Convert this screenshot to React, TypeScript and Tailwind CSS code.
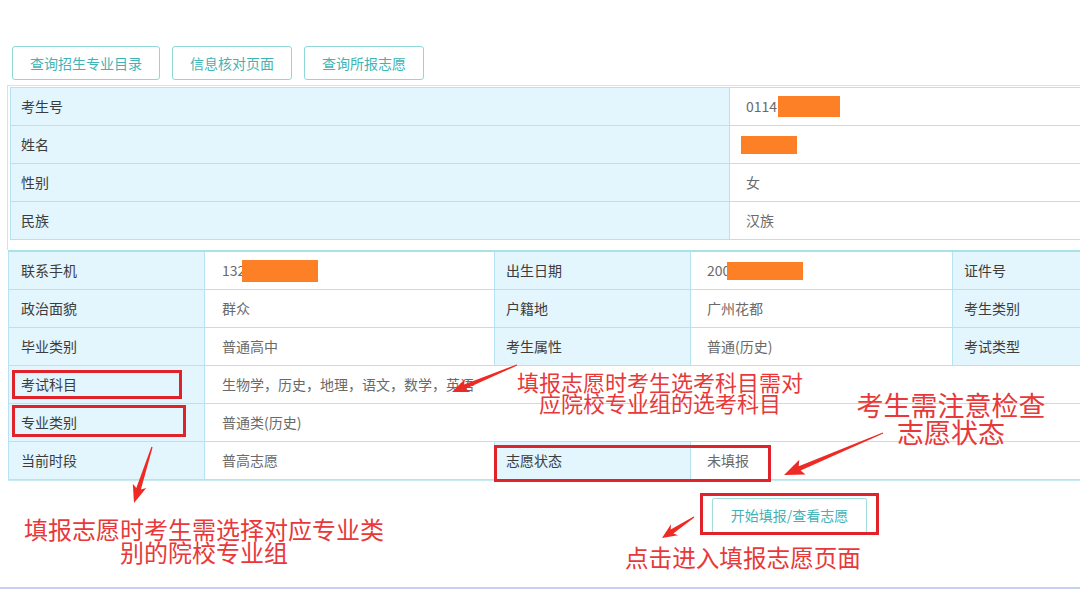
import React from "react";

type P = [number, number];

function arrowPoints(t: P, h: P, headLen = 17, headHalf = 7, tailHalf = 0.6, shaftHalf = 2.4): string {
  const dx = h[0] - t[0];
  const dy = h[1] - t[1];
  const len = Math.hypot(dx, dy);
  const ux = dx / len;
  const uy = dy / len;
  const nx = -uy;
  const ny = ux;
  const bx = h[0] - ux * headLen;
  const by = h[1] - uy * headLen;
  const jx = bx + ux * 3;
  const jy = by + uy * 3;
  const pts: P[] = [
    [t[0] + nx * tailHalf, t[1] + ny * tailHalf],
    [jx + nx * shaftHalf, jy + ny * shaftHalf],
    [bx + nx * headHalf, by + ny * headHalf],
    [h[0], h[1]],
    [bx - nx * headHalf, by - ny * headHalf],
    [jx - nx * shaftHalf, jy - ny * shaftHalf],
    [t[0] - nx * tailHalf, t[1] - ny * tailHalf],
  ];
  return pts.map((p) => `${p[0].toFixed(1)},${p[1].toFixed(1)}`).join(" ");
}

const Orange = ({ w, h, ml = 0 }: { w: number; h: number; ml?: number }) => (
  <span
    className="inline-block bg-[#fd7f26] align-middle"
    style={{ width: w, height: h, marginLeft: ml }}
  />
);

function TopButton({ children }: { children: React.ReactNode }) {
  return (
    <div className="h-[34px] px-[17px] flex items-center border border-[#8fd7d7] rounded-[3px] text-[14px] text-[#3fb4b5] bg-white">
      {children}
    </div>
  );
}

const lab = "bg-[#e3f5fd] border-r border-b border-[#b9e1f4] flex items-center text-[14px] text-[#3c3c3c] h-[38px]";
const val = "bg-white border-r border-b border-[#b9e1f4] flex items-center text-[14px] text-[#6a6a6a] h-[38px]";

export default function App() {
  return (
    <div className="relative w-[1080px] h-[589px] overflow-hidden bg-white flex flex-col font-['Noto_Sans_CJK_SC','Microsoft_YaHei',sans-serif]">
      {/* top buttons */}
      <div className="pt-[46px] pl-[12px] flex gap-[12px]">
        <TopButton>查询招生专业目录</TopButton>
        <TopButton>信息核对页面</TopButton>
        <TopButton>查询所报志愿</TopButton>
      </div>

      {/* panel 1 */}
      <div className="mt-[5px] ml-[7px] w-[1200px] border-l border-t border-[#c3eaee] pl-[2px] pt-[1px] pb-[10px]">
        <div className="border-l border-t border-[#b9e1f4] grid grid-cols-[719px_1fr]">
          <div className={`${lab} pl-[10px]`}>考生号</div>
          <div className={`${val} pl-[16px]`}>
            <span>0114</span>
            <Orange w={62} h={21} ml={1} />
          </div>
          <div className={`${lab} pl-[10px]`}>姓名</div>
          <div className={`${val} pl-[11px]`}>
            <Orange w={56} h={18} />
          </div>
          <div className={`${lab} pl-[10px]`}>性别</div>
          <div className={`${val} pl-[16px]`}>女</div>
          <div className={`${lab} pl-[10px]`}>民族</div>
          <div className={`${val} pl-[16px]`}>汉族</div>
        </div>
      </div>

      {/* table 2 */}
      <div className="ml-[8px] w-[1220px] border-t-2 border-t-[#a7e2e6] border-l border-l-[#b9e1f4] border-b border-b-[#c6ecf0]">
        <div className="grid grid-cols-[196px_290px_196px_262px_276px]">
          <div className={`${lab} pl-[12px]`}>联系手机</div>
          <div className={`${val} pl-[17px]`}>
            <span>132</span>
            <Orange w={76} h={22} ml={-3} />
          </div>
          <div className={`${lab} pl-[11px]`}>出生日期</div>
          <div className={`${val} pl-[16px]`}>
            <span>200</span>
            <Orange w={76} h={18} ml={-3} />
          </div>
          <div className={`${lab} pl-[11px]`}>证件号</div>

          <div className={`${lab} pl-[12px]`}>政治面貌</div>
          <div className={`${val} pl-[17px]`}>群众</div>
          <div className={`${lab} pl-[11px]`}>户籍地</div>
          <div className={`${val} pl-[16px]`}>广州花都</div>
          <div className={`${lab} pl-[11px]`}>考生类别</div>

          <div className={`${lab} pl-[12px]`}>毕业类别</div>
          <div className={`${val} pl-[17px]`}>普通高中</div>
          <div className={`${lab} pl-[11px]`}>考生属性</div>
          <div className={`${val} pl-[16px]`}>普通(历史)</div>
          <div className={`${lab} pl-[11px]`}>考试类型</div>

          <div className={`${lab} pl-[12px]`}>考试科目</div>
          <div className={`${val} pl-[17px] col-span-4`}>生物学，历史，地理，语文，数学，英语</div>

          <div className={`${lab} pl-[12px]`}>专业类别</div>
          <div className={`${val} pl-[17px] col-span-4`}>普通类(历史)</div>

          <div className={`${lab} pl-[12px]`}>当前时段</div>
          <div className={`${val} pl-[17px]`}>普高志愿</div>
          <div className={`${lab} pl-[11px]`}>志愿状态</div>
          <div className={`${val} pl-[16px] col-span-2`}>未填报</div>
        </div>
      </div>

      {/* start button */}
      <div className="mt-[17px] ml-[712px]">
        <div className="w-[155px] h-[35px] flex items-center justify-center border border-[#a3dcdc] rounded-[2px] text-[14px] text-[#41b3b6] bg-white shadow-[0_1px_2px_rgba(0,0,0,0.08)]">
          开始填报/查看志愿
        </div>
      </div>

      <div className="mt-auto h-[2px] bg-[#c8d0f3]" />

      {/* red highlight boxes */}
      <div className="absolute left-[12px] top-[370px] w-[170px] h-[29px] border-[3px] border-[#e0232b]" />
      <div className="absolute left-[12px] top-[405px] w-[174px] h-[32px] border-[3px] border-[#e0232b]" />
      <div className="absolute left-[494px] top-[445px] w-[277px] h-[37px] border-[3px] border-[#e0232b]" />
      <div className="absolute left-[700px] top-[493px] w-[179px] h-[42px] border-[3px] border-[#e0232b]" />

      {/* annotations */}
      <div className="absolute left-[514px] top-[371px] w-[292px] text-center text-[22px] leading-[21px] text-[#e8383a] whitespace-nowrap">
        填报志愿时考生选考科目需对
        <br />
        应院校专业组的选考科目
      </div>
      <div className="absolute left-[856px] top-[391px] w-[190px] text-center text-[27px] leading-[27px] text-[#e8383a] whitespace-nowrap">
        考生需注意检查
        <br />
        志愿状态
      </div>
      <div className="absolute left-[24px] top-[517px] w-[360px] text-center text-[24px] leading-[23px] text-[#e8383a] whitespace-nowrap">
        填报志愿时考生需选择对应专业类
        <br />
        别的院校专业组
      </div>
      <div className="absolute left-[625px] top-[543px] text-[23.6px] leading-[28px] text-[#e8383a] whitespace-nowrap">
        点击进入填报志愿页面
      </div>

      {/* arrows */}
      <svg className="absolute left-0 top-0 pointer-events-none" width="1080" height="589" viewBox="0 0 1080 589">
        <g fill="#ee2a24">
          <polygon points={arrowPoints([517, 365], [452, 392], 17, 7)} />
          <polygon points={arrowPoints([152, 447], [134, 503], 18, 7)} />
          <polygon points={arrowPoints([883, 433], [784, 475], 20, 8)} />
          <polygon points={arrowPoints([694, 517], [662, 538], 15, 6.5)} />
        </g>
      </svg>
    </div>
  );
}
